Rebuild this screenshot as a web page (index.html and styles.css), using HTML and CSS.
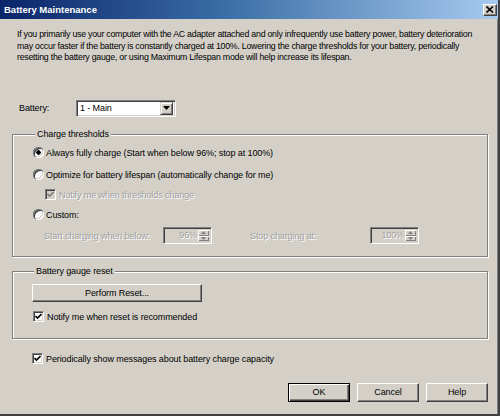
FILE: index.html
```html
<!DOCTYPE html>
<html>
<head>
<meta charset="utf-8">
<link rel="stylesheet" href="styles.css">
</head>
<body>
<div class="window">
  <div class="titlebar">
    <span class="title">Battery Maintenance</span>
    <span class="close"><svg width="8" height="7" viewBox="0 0 8 7"><path d="M0.5 0.5 L7 6.5 M7 0.5 L0.5 6.5" stroke="#000" stroke-width="1.6"/></svg></span>
  </div>
  <div class="body">
    <p class="intro">If you primarily use your computer with the AC adapter attached and only infrequently use battery power, battery deterioration<br>may occur faster if the battery is constantly charged at 100%. Lowering the charge thresholds for your battery, periodically<br>resetting the battery gauge, or using Maximum Lifespan mode will help increase its lifespan.</p>

    <div class="battery-row">
      <span class="battery-label">Battery:</span>
      <div class="select">
        <span class="select-text">1 - Main</span>
        <span class="drop"><svg width="7" height="4" viewBox="0 0 7 4"><path d="M0 0 H7 L3.5 4 Z" fill="#000"/></svg></span>
      </div>
    </div>

    <fieldset class="group g1">
      <legend>Charge thresholds</legend>
      <div class="opt r1"><span class="radio on"></span><span>Always fully charge (Start when below 96%; stop at 100%)</span></div>
      <div class="opt r2"><span class="radio"></span><span>Optimize for battery lifespan (automatically change for me)</span></div>
      <div class="opt sub disabled"><span class="check dis"><svg width="7" height="7" viewBox="0 0 7 7"><path d="M0.5 3 L2.5 5 L6.5 1" stroke="#808080" stroke-width="1.6" fill="none"/></svg></span><span>Notify me when thresholds change</span></div>
      <div class="opt r3"><span class="radio"></span><span>Custom:</span></div>
      <div class="custom-row disabled">
        <span class="lbl-start">Start charging when below:</span>
        <div class="spin s1"><span class="spin-val">96%</span><span class="spin-btns"><span class="sb"><svg width="5" height="3" viewBox="0 0 5 3"><path d="M0 3 H5 L2.5 0 Z" fill="#808080"/></svg></span><span class="sb"><svg width="5" height="3" viewBox="0 0 5 3"><path d="M0 0 H5 L2.5 3 Z" fill="#808080"/></svg></span></span></div>
        <span class="lbl-stop">Stop charging at:</span>
        <div class="spin s2"><span class="spin-val">100%</span><span class="spin-btns"><span class="sb"><svg width="5" height="3" viewBox="0 0 5 3"><path d="M0 3 H5 L2.5 0 Z" fill="#808080"/></svg></span><span class="sb"><svg width="5" height="3" viewBox="0 0 5 3"><path d="M0 0 H5 L2.5 3 Z" fill="#808080"/></svg></span></span></div>
      </div>
    </fieldset>

    <fieldset class="group g2">
      <legend>Battery gauge reset</legend>
      <div class="btn reset">Perform Reset...</div>
      <div class="opt chk-row"><span class="check"><svg width="7" height="7" viewBox="0 0 7 7"><path d="M0.5 3 L2.5 5 L6.5 1" stroke="#000" stroke-width="1.6" fill="none"/></svg></span><span>Notify me when reset is recommended</span></div>
    </fieldset>

    <div class="opt periodic"><span class="check"><svg width="7" height="7" viewBox="0 0 7 7"><path d="M0.5 3 L2.5 5 L6.5 1" stroke="#000" stroke-width="1.6" fill="none"/></svg></span><span>Periodically show messages about battery charge capacity</span></div>

    <div class="buttons">
      <div class="btn default">OK</div>
      <div class="btn">Cancel</div>
      <div class="btn">Help</div>
    </div>
  </div>
</div>
</body>
</html>
```

FILE: styles.css
```css
* { box-sizing: border-box; }
html, body { margin: 0; padding: 0; }
body {
  width: 500px;
  height: 416px;
  overflow: hidden;
  background: #D4D0C8;
  font-family: "Liberation Sans", Arial, sans-serif;
  font-size: 9px;
  letter-spacing: -0.1px;
  color: #000;
}
.window {
  width: 500px;
  height: 416px;
  background: #D4D0C8;
  border-right: 2px solid #404040;
  border-bottom: 2px solid #404040;
  display: flex;
  flex-direction: column;
}
.titlebar {
  height: 19px;
  flex: none;
  background: linear-gradient(to right, #0A246A 0%, #3A6EA5 45%, #A6CAF0 100%);
  display: flex;
  align-items: center;
  justify-content: space-between;
  padding: 0 1px 0 4px;
}
.title {
  color: #fff;
  font-weight: bold;
  font-size: 9.5px;
  letter-spacing: 0;
}
.close {
  width: 14px;
  height: 12px;
  background: #D4D0C8;
  border-top: 1px solid #fff;
  border-left: 1px solid #fff;
  border-right: 1px solid #404040;
  border-bottom: 1px solid #404040;
  box-shadow: inset -1px -1px 0 #808080;
  display: flex;
  align-items: center;
  justify-content: center;
}
.body {
  flex: 1;
  padding: 0 10px 0 12px;
  display: flex;
  flex-direction: column;
  box-shadow: inset -1px 0 0 #808080;
}
.intro {
  margin: 10px 0 0 5px;
  line-height: 11.5px;
  font-size: 8.8px;
  letter-spacing: -0.25px;
  white-space: nowrap;
}
.battery-row {
  margin-top: 36px;
  display: flex;
  align-items: center;
  height: 17px;
}
.battery-label { width: 64px; padding-left: 7px; }
.select {
  width: 100px;
  height: 17px;
  background: #fff;
  border-top: 1px solid #808080;
  border-left: 1px solid #808080;
  border-right: 1px solid #fff;
  border-bottom: 1px solid #fff;
  box-shadow: inset 1px 1px 0 #404040, inset -1px -1px 0 #D4D0C8;
  display: flex;
  align-items: center;
  justify-content: space-between;
  padding: 2px;
}
.select-text { padding-left: 1px; }
.drop {
  width: 13px;
  height: 13px;
  background: #D4D0C8;
  border-top: 1px solid #D4D0C8;
  border-left: 1px solid #D4D0C8;
  border-right: 1px solid #404040;
  border-bottom: 1px solid #404040;
  box-shadow: inset 1px 1px 0 #fff, inset -1px -1px 0 #808080;
  display: flex;
  align-items: center;
  justify-content: center;
}
.group {
  margin: 0;
  border: 1px solid #808080;
  box-shadow: 1px 1px 0 #fff, inset 1px 1px 0 #fff;
  min-width: 0;
}
.group legend {
  padding: 0 2px;
  margin-left: 2px;
  line-height: 11px;
  background: #D4D0C8;
}
.g1 {
  margin-top: 12px;
  height: 128px;
  width: 476px;
  padding: 2px 0 0 20px;
}
.g2 {
  margin-top: 9px;
  height: 73px;
  width: 476px;
  padding: 7px 0 0 19px;
}
.opt {
  display: flex;
  align-items: center;
  height: 20px;
  white-space: nowrap;
}
.opt.r1, .opt.r2, .opt.r3 { height: 22px; }
.opt.sub { height: 18px; }
.opt .radio { margin-right: 2px; }
.opt .check { margin-right: 3px; }
.sub { padding-left: 12px; }
.disabled { color: #A0A0A0; text-shadow: 1px 1px 0 #fff; }
.radio {
  width: 11px;
  height: 11px;
  flex: none;
  border-radius: 50%;
  background: #fff;
  box-shadow: inset 1px 1px 0 #808080, inset 2px 2px 0 #404040, inset -1px -1px 0 #fff, inset -2px -2px 0 #D4D0C8;
}
.radio.on {
  background: radial-gradient(circle at 50% 50%, #000 0 2px, #fff 2.4px);
}
.check {
  width: 11px;
  height: 11px;
  flex: none;
  background: #fff;
  border-top: 1px solid #808080;
  border-left: 1px solid #808080;
  border-right: 1px solid #fff;
  border-bottom: 1px solid #fff;
  box-shadow: inset 1px 1px 0 #404040, inset -1px -1px 0 #D4D0C8;
  display: flex;
  align-items: center;
  justify-content: center;
}
.check.dis { background: #D4D0C8; }
.custom-row {
  display: flex;
  align-items: center;
  height: 20px;
  padding-left: 11px;
}
.lbl-start { width: 119px; }
.lbl-stop { width: 120px; margin-left: 38px; }
.spin {
  width: 49px;
  height: 17px;
  background: #D4D0C8;
  border-top: 1px solid #808080;
  border-left: 1px solid #808080;
  border-right: 1px solid #fff;
  border-bottom: 1px solid #fff;
  box-shadow: inset 1px 1px 0 #404040, inset -1px -1px 0 #D4D0C8;
  display: flex;
  align-items: stretch;
  padding: 2px;
}
.spin-val {
  flex: 1;
  text-align: right;
  padding-right: 1px;
  line-height: 11px;
  align-self: center;
}
.spin-btns {
  width: 11px;
  display: flex;
  flex-direction: column;
}
.sb {
  flex: 1;
  background: #D4D0C8;
  box-shadow: inset 1px 1px 0 #fff, inset -1px -1px 0 #808080;
  display: flex;
  align-items: center;
  justify-content: center;
}
.btn {
  height: 18px;
  display: flex;
  align-items: center;
  justify-content: center;
  background: #D4D0C8;
  border-top: 1px solid #fff;
  border-left: 1px solid #fff;
  border-right: 1px solid #404040;
  border-bottom: 1px solid #404040;
  box-shadow: inset -1px -1px 0 #808080;
}
.reset {
  width: 170px;
  height: 18px;
}
.chk-row { margin-top: 4px; height: 22px; padding-left: 1px; }
.periodic { margin-top: 10px; padding-left: 20px; }
.buttons {
  margin-top: 14px;
  display: flex;
  justify-content: flex-end;
  gap: 7px;
}
.buttons .btn { width: 62px; height: 19px; }
.btn.default {
  border: 1px solid #000;
  box-shadow: inset 1px 1px 0 #fff, inset -1px -1px 0 #404040, inset -2px -2px 0 #808080;
}
```
